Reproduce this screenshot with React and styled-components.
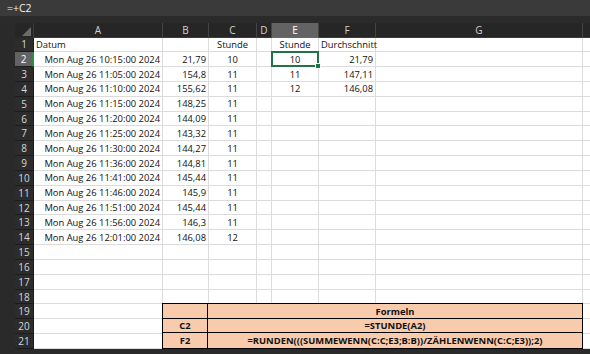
import React from "react";
import styled, { createGlobalStyle, css } from "styled-components";

const GlobalStyle = createGlobalStyle`
  html, body { margin: 0; padding: 0; background: #2a2a2a; overflow: hidden; }
  body { width: 590px; height: 354px; }
`;

const FONT = `"Open Sans", "Noto Sans", sans-serif`;

const FormulaBar = styled.div`
  height: 16px;
  background: #3a3a3a;
  color: #f2f2f2;
  font: 10.5px ${FONT};
  display: flex;
  align-items: center;
  padding-left: 7px;
`;

const Band = styled.div`
  height: 7px;
  background: #2b2b2b;
`;

const Sheet = styled.div`
  display: grid;
  grid-template-columns: 19px 129px 46px 48px 15px 47px 57px 207px 30px;
  grid-template-rows: 14.5px repeat(21, 14.83px);
  padding-left: 15px;
  font-family: ${FONT};
`;

const placed = css`
  grid-row: ${(p) => p.$row};
  grid-column: ${(p) => p.$col};
`;

const Corner = styled.div`
  grid-row: 1;
  grid-column: 1;
  background: #262626;
  border-right: 1px solid #3c3c3c;
  position: relative;
  &::after {
    content: "";
    position: absolute;
    right: 2px;
    bottom: 2px;
    border-style: solid;
    border-width: 0 0 9px 9px;
    border-color: transparent transparent #6b6b6b transparent;
  }
`;

const ColHeader = styled.div`
  ${placed};
  box-sizing: border-box;
  background: ${(p) => (p.$active ? "#636363" : "#262626")};
  color: ${(p) => (p.$active ? "#ffffff" : "#d2d2d2")};
  border-right: 1px solid #444;
  border-bottom: ${(p) => (p.$active ? "1px solid #2f8a4a" : "1px solid #3a3a3a")};
  font-size: 10px;
  display: flex;
  align-items: center;
  justify-content: center;
`;

const RowHeader = styled.div`
  ${placed};
  box-sizing: border-box;
  background: ${(p) => (p.$active ? "#636363" : "#2c2c2c")};
  color: ${(p) => (p.$active ? "#ffffff" : "#d6d6d6")};
  border-bottom: 1px solid #1c1c1c;
  border-right: ${(p) => (p.$active ? "2px solid #2f8a4a" : "1px solid #1c1c1c")};
  font-size: 10px;
  font-weight: 500;
  display: flex;
  align-items: center;
  justify-content: center;
`;

const Cell = styled.div`
  ${placed};
  box-sizing: border-box;
  background: #ffffff;
  color: #111;
  border-right: 1px solid #dcdcdc;
  border-bottom: 1px solid #dcdcdc;
  font-size: 9.4px;
  white-space: nowrap;
  overflow: visible;
  display: flex;
  align-items: center;
  padding: 0 2px;
  position: relative;
  z-index: ${(p) => (p.$filled ? 1 : "auto")};
  justify-content: ${(p) =>
    p.$align === "right" ? "flex-end" : p.$align === "center" ? "center" : "flex-start"};
  ${(p) =>
    p.$selected &&
    css`
      z-index: 2;
      &::after {
        content: "";
        position: absolute;
        left: -1px;
        top: -1px;
        right: -1px;
        bottom: -1px;
        border: 2px solid #217346;
      }
      &::before {
        content: "";
        position: absolute;
        right: -3px;
        bottom: -3px;
        width: 4px;
        height: 4px;
        background: #217346;
        border: 1px solid #fff;
        z-index: 3;
      }
    `}
`;

const Formeln = styled.div`
  grid-column: 3 / 9;
  grid-row: 20 / 23;
  box-sizing: border-box;
  margin-top: -1px;
  margin-left: -1px;
  border: 1.5px solid #000;
  background: #f8cbad;
  display: grid;
  grid-template-columns: 45px 1fr;
  grid-template-rows: repeat(3, 1fr);
  position: relative;
  z-index: 1;
`;

const FCell = styled.div`
  box-sizing: border-box;
  border-right: ${(p) => (p.$first ? "1px solid #000" : "none")};
  border-bottom: ${(p) => (p.$last ? "none" : "1px solid #000")};
  font-size: 9.4px;
  font-weight: 700;
  color: #111;
  display: flex;
  align-items: center;
  justify-content: center;
  white-space: nowrap;
`;

const dates = [
  "10:15", "11:05", "11:10", "11:15", "11:20", "11:25", "11:30",
  "11:36", "11:41", "11:46", "11:51", "11:56", "12:01",
];
const values = [
  "21,79", "154,8", "155,62", "148,25", "144,09", "143,32", "144,27",
  "144,81", "145,44", "145,9", "145,44", "146,3", "146,08",
];
const hours = ["10", "11", "11", "11", "11", "11", "11", "11", "11", "11", "11", "11", "12"];

const cols = ["A", "B", "C", "D", "E", "F", "G", "H"];

function cellContent(r, c) {
  if (r === 1) {
    if (c === "A") return ["Datum", "left"];
    if (c === "C") return ["Stunde", "center"];
    if (c === "E") return ["Stunde", "center"];
    if (c === "F") return ["Durchschnitt", "left"];
    return ["", "left"];
  }
  if (r >= 2 && r <= 14) {
    const i = r - 2;
    if (c === "A") return [`Mon Aug 26 ${dates[i]}:00 2024`, "right"];
    if (c === "B") return [values[i], "right"];
    if (c === "C") return [hours[i], "center"];
  }
  if (r >= 2 && r <= 4) {
    const e = ["10", "11", "12"][r - 2];
    const f = ["21,79", "147,11", "146,08"][r - 2];
    if (c === "E") return [e, "center"];
    if (c === "F") return [f, "right"];
  }
  return ["", "left"];
}

export default function App() {
  const rows = Array.from({ length: 21 }, (_, i) => i + 1);
  const inFormeln = (r, c) => r >= 19 && ["B", "C", "D", "E", "F", "G"].includes(c);
  return (
    <>
      <GlobalStyle />
      <FormulaBar>=+C2</FormulaBar>
      <Band />
      <Sheet>
        <Corner />
        {cols.map((c, ci) => (
          <ColHeader key={c} $row={1} $col={ci + 2} $active={c === "E"}>
            {c === "H" ? "" : c}
          </ColHeader>
        ))}
        {rows.map((r) => (
          <React.Fragment key={r}>
            <RowHeader $row={r + 1} $col={1} $active={r === 2}>
              {r}
            </RowHeader>
            {cols.map((c, ci) => {
              if (inFormeln(r, c)) return null;
              const [text, align] = cellContent(r, c);
              return (
                <Cell
                  key={c}
                  $row={r + 1}
                  $col={ci + 2}
                  $align={align}
                  $filled={text !== ""}
                  $selected={r === 2 && c === "E"}
                >
                  {text}
                </Cell>
              );
            })}
          </React.Fragment>
        ))}
        <Formeln>
          <FCell $first />
          <FCell>Formeln</FCell>
          <FCell $first>C2</FCell>
          <FCell>=STUNDE(A2)</FCell>
          <FCell $first $last>F2</FCell>
          <FCell $last>=RUNDEN(((SUMMEWENN(C:C;E3;B:B))/ZÄHLENWENN(C:C;E3));2)</FCell>
        </Formeln>
      </Sheet>
    </>
  );
}
